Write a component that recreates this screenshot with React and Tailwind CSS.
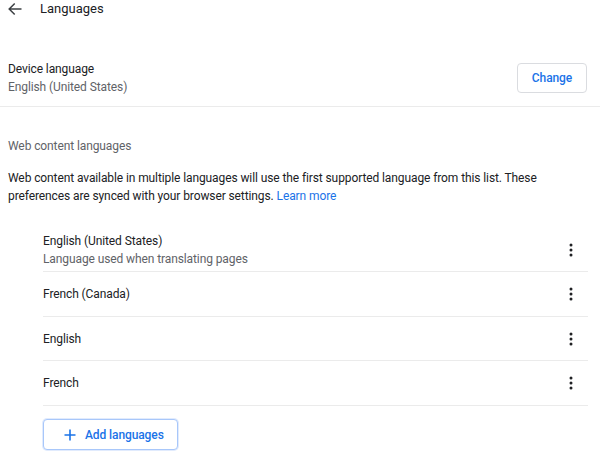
import React from "react";

function Dots() {
  return (
    <svg width="20" height="20" viewBox="0 0 20 20" className="text-[#202124]">
      <circle cx="10" cy="5" r="1.5" fill="currentColor" />
      <circle cx="10" cy="10" r="1.5" fill="currentColor" />
      <circle cx="10" cy="15" r="1.5" fill="currentColor" />
    </svg>
  );
}

function Row({ title, h }) {
  return (
    <div className={`flex items-center border-b border-[#ebebeb] ${h}`}>
      <div className="flex-1 text-[12px] leading-[18px] text-[#202124]">{title}</div>
      <div className="w-[20px] mr-[7px] flex items-center justify-center">
        <Dots />
      </div>
    </div>
  );
}

export default function App() {
  return (
    <div className="w-[600px] h-[460px] bg-white overflow-hidden tracking-[-0.1px]" style={{ fontFamily: "Roboto, 'Liberation Sans', sans-serif" }}>
      <div className="flex items-center h-[18px] pl-[8px]">
        <svg width="14" height="14" viewBox="0 0 14 14" className="text-[#3c4043]">
          <path d="M13.5 7H1.2M6.7 1.5L1.2 7l5.5 5.5" fill="none" stroke="currentColor" strokeWidth="1.5" />
        </svg>
        <div className="ml-[18px] text-[13px] text-[#202124] tracking-normal">Languages</div>
      </div>
      <div className="flex items-center justify-between h-[89px] pt-[31px] pl-[8px] pr-[13px] border-b border-[#ebebeb]">
        <div className="flex flex-col">
          <div className="text-[12px] leading-[18px] text-[#202124]">Device language</div>
          <div className="text-[12px] leading-[18px] text-[#5f6368]">English (United States)</div>
        </div>
        <button className="w-[70px] h-[30px] rounded-[4px] border border-[#dadce0] text-[12px] font-medium text-[#1a73e8] bg-white">
          Change
        </button>
      </div>
      <div className="pl-[8px] pt-[30px] text-[12px] leading-[18px] text-[#5f6368]">Web content languages</div>
      <div className="pl-[8px] pr-[8px] pt-[14px] text-[12px] leading-[18px] text-[#202124]">
        Web content available in multiple languages will use the first supported language from this list. These<br />
        preferences are synced with your browser settings.{" "}
        <span className="text-[#1a73e8]">Learn more</span>
      </div>
      <div className="ml-[43px] mr-[12px] mt-[20px]">
        <div className="flex items-center h-[47px] pt-[4px] border-b border-[#ebebeb]">
          <div className="flex-1 flex flex-col">
            <div className="text-[12px] leading-[18px] text-[#202124]">English (United States)</div>
            <div className="text-[12px] leading-[18px] text-[#5f6368]">Language used when translating pages</div>
          </div>
          <div className="w-[20px] mr-[7px] flex items-center justify-center">
            <Dots />
          </div>
        </div>
        <Row title="French (Canada)" h="h-[45px]" />
        <Row title="English" h="h-[44px]" />
        <Row title="French" h="h-[45px]" />
      </div>
      <div className="ml-[43px] mt-[13px]">
        <button className="flex items-center w-[135px] h-[31px] rounded-[4px] border border-[#a8c7fa] bg-white text-[12px] font-medium text-[#1a73e8] shadow-[0_0_0_1px_rgba(168,199,250,0.35)]">
          <svg width="14" height="14" viewBox="0 0 14 14" className="ml-[19px]">
            <path d="M7 1.5v11M1.5 7h11" stroke="currentColor" strokeWidth="1.6" />
          </svg>
          <span className="ml-[8px]">Add languages</span>
        </button>
      </div>
    </div>
  );
}
